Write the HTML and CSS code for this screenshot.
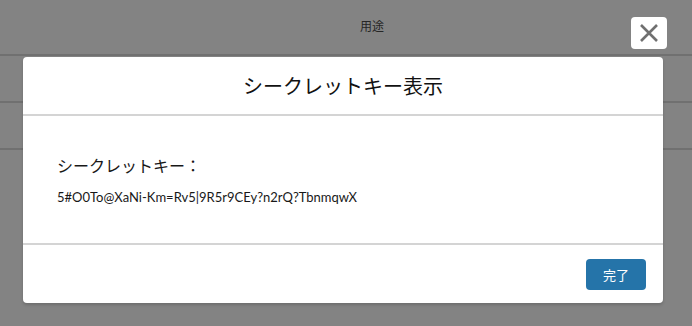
FILE: index.html
```html
<!DOCTYPE html>
<html lang="ja">
  <head>
    <meta charset="UTF-8" />
    <meta name="viewport" content="width=device-width, initial-scale=1.0" />
    <title>シークレットキー表示</title>
    <link rel="stylesheet" href="styles.css">
  </head>
  <body>
    <main class="page">
      <div class="table-head">
        <span class="col-label">用途</span>
      </div>
      <div class="table-row"></div>
      <div class="table-row"></div>
    </main>

    <div class="backdrop">
      <button class="modal-close" title="閉じる">
        <svg width="20" height="20" viewBox="0 0 20 20">
          <path d="M2 2 L18 18 M18 2 L2 18" stroke="#707070" stroke-width="2.6" fill="none" />
        </svg>
      </button>
      <section class="modal">
        <header class="modal-header">
          <h2>シークレットキー表示</h2>
        </header>
        <div class="modal-body">
          <p class="key-label">シークレットキー：</p>
          <p class="key-value">5#O0To@XaNi-Km=Rv5|9R5r9CEy?n2rQ?TbnmqwX</p>
        </div>
        <footer class="modal-footer">
          <button class="btn-done">完了</button>
        </footer>
      </section>
    </div>
  </body>
</html>
```

FILE: styles.css
```css
* {
  box-sizing: border-box;
}
body {
  margin: 0;
  background-color: #ffffff;
  font-family: Lato, "Noto Sans CJK JP", sans-serif;
  color: #181818;
}
.page {
  width: 692px;
  height: 326px;
}
.table-head {
  height: 56px;
  border-bottom: 2px solid #d8d8d8;
  padding-top: 15px;
  padding-left: 360px;
}
.col-label {
  font-family: "Noto Sans CJK JP", sans-serif;
  font-size: 12px;
  color: #444444;
}
.table-row {
  height: 47px;
  border-bottom: 2px solid #d8d8d8;
}

/* overlay */
.backdrop {
  position: absolute;
  top: 0;
  left: 0;
  width: 692px;
  height: 326px;
  background-color: rgba(8, 8, 8, 0.5);
}
.modal-close {
  position: absolute;
  top: 17px;
  left: 631px;
  width: 36px;
  height: 32px;
  padding: 0;
  border: none;
  border-radius: 4px;
  background-color: #ffffff;
  display: flex;
  align-items: center;
  justify-content: center;
}
.modal {
  position: absolute;
  top: 57px;
  left: 23px;
  width: 640px;
  background-color: #ffffff;
  border-radius: 4px;
  box-shadow: 0 2px 3px rgba(0, 0, 0, 0.16);
}
.modal-header {
  height: 59px;
  border-bottom: 2px solid #d4d4d4;
  display: flex;
  align-items: center;
  justify-content: center;
}
.modal-header h2 {
  margin: 0;
  font-family: "Noto Sans CJK JP", sans-serif;
  font-weight: 400;
  font-size: 20px;
  color: #111111;
}
.modal-body {
  height: 129px;
  border-bottom: 2px solid #d4d4d4;
  padding: 37px 34px 0;
}
.key-label {
  margin: 0 0 11px;
  font-family: "Noto Sans CJK JP", sans-serif;
  font-size: 16px;
  line-height: 24px;
}
.key-value {
  margin: 0;
  font-size: 13px;
  line-height: 18px;
}
.modal-footer {
  height: 58px;
  display: flex;
  align-items: center;
  justify-content: flex-end;
  padding-right: 17px;
}
.btn-done {
  width: 60px;
  height: 31px;
  border: none;
  border-radius: 4px;
  background-color: #2574a9;
  color: #ffffff;
  font-family: "Noto Sans CJK JP", sans-serif;
  font-size: 13px;
}
```
